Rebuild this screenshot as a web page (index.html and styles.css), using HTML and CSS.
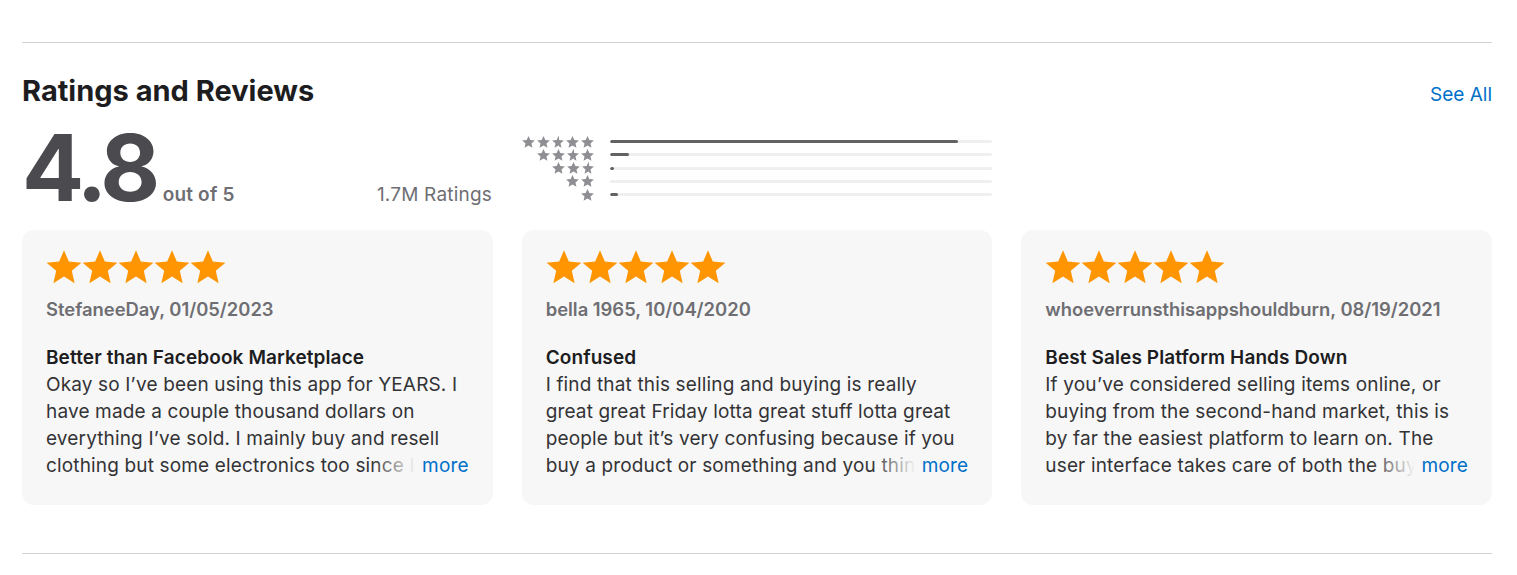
FILE: index.html
```html
<!DOCTYPE html>
<html lang="en">
<head>
<meta charset="utf-8">
<title>Ratings and Reviews</title>
<link rel="stylesheet" href="styles.css">
</head>
<body>
<section class="reviews">
  <div class="rule"></div>
  <header class="head">
    <h2 class="title">Ratings and Reviews</h2>
    <a class="see-all" href="#">See All</a>
  </header>
  <div class="summary">
    <div class="score">
      <span class="big">4.8</span>
      <span class="outof">out of 5</span>
      <span class="count">1.7M Ratings</span>
    </div>
    <div class="hist">
      <div class="hrow"><span class="mini s5"></span><div class="track"><div class="fill" style="width:91%"></div></div></div>
      <div class="hrow"><span class="mini s4"></span><div class="track"><div class="fill" style="width:5%"></div></div></div>
      <div class="hrow"><span class="mini s3"></span><div class="track"><div class="fill" style="width:1%"></div></div></div>
      <div class="hrow"><span class="mini s2"></span><div class="track"><div class="fill" style="width:0%"></div></div></div>
      <div class="hrow"><span class="mini s1"></span><div class="track"><div class="fill" style="width:2%"></div></div></div>
    </div>
  </div>
  <div class="cards">
    <article class="card">
      <div class="stars"></div>
      <div class="author">StefaneeDay, 01/05/2023</div>
      <h3 class="rtitle">Better than Facebook Marketplace</h3>
      <div class="body-wrap">
        <p class="body">Okay so I’ve been using this app for YEARS. I have made a couple thousand dollars on everything I’ve sold. I mainly buy and resell clothing but some electronics too since I started a while ago and it has been great.</p>
        <span class="more"><a href="#">more</a></span>
      </div>
    </article>
    <article class="card">
      <div class="stars"></div>
      <div class="author">bella 1965, 10/04/2020</div>
      <h3 class="rtitle">Confused</h3>
      <div class="body-wrap">
        <p class="body">I find that this selling and buying is really great great Friday lotta great stuff lotta great people but it’s very confusing because if you buy a product or something and you think it is not right.</p>
        <span class="more"><a href="#">more</a></span>
      </div>
    </article>
    <article class="card">
      <div class="stars"></div>
      <div class="author">whoeverrunsthisappshouldburn, 08/19/2021</div>
      <h3 class="rtitle">Best Sales Platform Hands Down</h3>
      <div class="body-wrap">
        <p class="body">If you’ve considered selling items online, or buying from the second-hand market, this is by far the easiest platform to learn on. The user interface takes care of both the buyer and the seller.</p>
        <span class="more"><a href="#">more</a></span>
      </div>
    </article>
  </div>
  <div class="rule bottom"></div>
</section>
</body>
</html>
```
FILE: styles.css
```css
html, body {
  margin: 0;
  padding: 0;
  background: #fff;
}
body {
  font-family: Inter, "Noto Sans", "Liberation Sans", sans-serif;
  color: #1d1d1f;
}
.reviews {
  width: 1470px;
  margin-left: 22px;
  padding-top: 42px;
}
.rule {
  height: 1px;
  background: #d2d2d7;
}
.rule.bottom {
  margin-top: 48px;
}
.head {
  display: flex;
  justify-content: space-between;
  align-items: baseline;
  margin-top: 31px;
}
.title {
  margin: 0;
  font-size: 29px;
  line-height: 34px;
  font-weight: 700;
  color: #1d1d1f;
}
.see-all {
  font-size: 19px;
  color: #0070c9;
  text-decoration: none;
}
.summary {
  display: flex;
  gap: 29px;
  margin-top: 14px;
}
.score {
  width: 470px;
  display: flex;
  align-items: baseline;
}
.big {
  font-size: 92px;
  line-height: 92px;
  font-weight: 700;
  letter-spacing: -4.5px;
  color: #4a4a4f;
}
.outof {
  margin-left: 7px;
  font-size: 19px;
  font-weight: 600;
  letter-spacing: 0.2px;
  color: #6e6e73;
}
.count {
  margin-left: auto;
  font-size: 19px;
  letter-spacing: 0.2px;
  color: #6e6e73;
}
.hist {
  width: 471px;
  padding-top: 13px;
}
.hrow {
  display: flex;
  align-items: center;
  height: 13.25px;
}
.mini {
  width: 74px;
  height: 14px;
  flex: none;
  box-sizing: border-box;
  background-image: url("data:image/svg+xml,%3Csvg xmlns='http://www.w3.org/2000/svg' viewBox='0 0 24 24'%3E%3Cpolygon fill='%238e8e93' points='12,1.5 15.1,8.6 22.8,9.3 17,14.4 18.7,22 12,18 5.3,22 7,14.4 1.2,9.3 8.9,8.6'/%3E%3C/svg%3E");
  background-size: 14.8px 14px;
  background-repeat: repeat-x;
  background-position: right center;
  background-clip: content-box;
}
.mini.s4 { padding-left: 14.8px; }
.mini.s3 { padding-left: 29.6px; }
.mini.s2 { padding-left: 44.4px; }
.mini.s1 { padding-left: 59.2px; }
.track {
  margin-left: 15px;
  width: 382px;
  height: 3px;
  border-radius: 2px;
  background: #efeff2;
  overflow: hidden;
}
.fill {
  height: 100%;
  background: #636366;
  border-radius: 2px;
}
.cards {
  display: grid;
  grid-template-columns: repeat(3, 1fr);
  gap: 29px;
  margin-top: 16px;
}
.card {
  background: #f7f7f7;
  border-radius: 12px;
  padding: 19px 24px 25px;
  height: 275px;
  box-sizing: border-box;
}
.stars {
  height: 36px;
  width: 180px;
  background-image: url("data:image/svg+xml,%3Csvg xmlns='http://www.w3.org/2000/svg' viewBox='0 0 24 24'%3E%3Cpolygon fill='%23ff9500' points='12,0.8 15.2,8.4 23.6,9.1 17.2,14.5 19.1,22.8 12,18.4 4.9,22.8 6.8,14.5 0.4,9.1 8.8,8.4'/%3E%3C/svg%3E");
  background-size: 36px 36px;
  background-repeat: repeat-x;
}
.author {
  margin-top: 12px;
  font-size: 18.4px;
  line-height: 24px;
  font-weight: 600;
  color: #6e6e73;
}
.rtitle {
  margin: 23px 0 0;
  font-size: 19px;
  line-height: 27px;
  font-weight: 600;
  color: #1d1d1f;
  letter-spacing: 0.1px;
}
.body-wrap {
  position: relative;
}
.body {
  margin: 0;
  font-size: 19px;
  line-height: 27px;
  letter-spacing: 0.15px;
  color: #333336;
  display: -webkit-box;
  -webkit-line-clamp: 4;
  -webkit-box-orient: vertical;
  overflow: hidden;
}
.more {
  position: absolute;
  right: 0;
  bottom: 0;
  font-size: 19px;
  line-height: 27px;
  letter-spacing: 0.15px;
  padding-left: 50px;
  background: linear-gradient(to right, rgba(247,247,247,0) 0, #f7f7f7 44px);
}
.more a {
  color: #0070c9;
  text-decoration: none;
}
```
